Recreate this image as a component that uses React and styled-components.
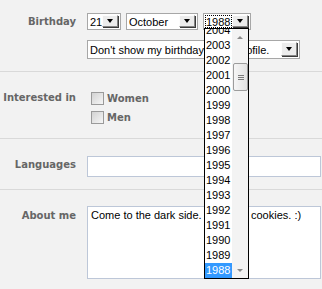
import React from 'react';
import styled, { createGlobalStyle } from 'styled-components';

const GlobalStyle = createGlobalStyle`
  html, body {
    margin: 0;
    padding: 0;
    background: #f2f2f2;
  }
  body {
    font-family: "Liberation Sans", Arial, sans-serif;
    font-size: 11px;
    color: #000;
  }
`;

const Page = styled.div`
  width: 322px;
  height: 289px;
  overflow: hidden;
  position: relative;
`;

const Section = styled.div`
  display: grid;
  grid-template-columns: 76px 1fr;
  column-gap: 11px;
  padding: ${p => p.$pad};
  border-bottom: ${p => (p.$last ? 'none' : '1px solid #d9d9d9')};
`;

const Label = styled.div`
  font-family: "DejaVu Sans", Verdana, sans-serif;
  font-weight: bold;
  font-size: 10px;
  line-height: 12px;
  color: #666;
  text-align: right;
  white-space: nowrap;
  padding-top: ${p => p.$top || 0}px;
`;

const Controls = styled.div`
  display: flex;
  flex-direction: column;
  align-items: flex-start;
  gap: ${p => p.$gap || 0}px;
`;

const SelectRow = styled.div`
  display: flex;
  gap: 5px;
`;

const SelectBox = styled.div`
  position: relative;
  box-sizing: border-box;
  width: ${p => p.$w}px;
  height: ${p => p.$h || 17}px;
  border: 1px solid #a7a7a7;
  background: #fff;
  padding: 1px;
  display: flex;
  align-items: stretch;
`;

const SelectValue = styled.div`
  flex: 1;
  display: flex;
  align-items: center;
  padding-left: 1px;
  white-space: nowrap;
  overflow: hidden;
  outline: ${p => (p.$focused ? '1px dotted #000' : 'none')};
  outline-offset: -1px;
`;

const ArrowButton = styled.div`
  box-sizing: border-box;
  width: 16px;
  background: #ececec;
  border: 1px solid;
  border-color: #fdfdfd #858585 #858585 #fdfdfd;
  box-shadow: 1px 1px 0 #3a3a3a;
  margin-right: 1px;
  margin-bottom: 1px;
  display: flex;
  align-items: center;
  justify-content: center;

  &::after {
    content: '';
    width: 0;
    height: 0;
    border-left: 3.5px solid transparent;
    border-right: 3.5px solid transparent;
    border-top: 4px solid #000;
  }
`;

const DropList = styled.div`
  position: absolute;
  left: 0;
  top: 14px;
  width: 45px;
  height: 251px;
  box-sizing: border-box;
  border: 1px solid #000;
  background: #fff;
  display: flex;
  overflow: hidden;
  z-index: 5;
`;

const Items = styled.div`
  flex: 1;
  margin-top: -6px;
  display: flex;
  flex-direction: column;
`;

const Item = styled.div`
  height: 15px;
  line-height: 15px;
  padding-left: 1px;
  background: ${p => (p.$selected ? '#3399ff' : 'transparent')};
  color: ${p => (p.$selected ? '#fff' : '#000')};
`;

const ScrollBar = styled.div`
  position: relative;
  width: 16px;
  background: #f3f3f3;
  display: flex;
  flex-direction: column;
  justify-content: space-between;
`;

const ScrollArrow = styled.div`
  height: 16px;
  display: flex;
  align-items: center;
  justify-content: center;

  &::after {
    content: '';
    width: 0;
    height: 0;
    border-left: 3px solid transparent;
    border-right: 3px solid transparent;
    ${p => (p.$down ? 'border-top: 3px solid #8a8a8a;' : 'border-bottom: 3px solid #8a8a8a;')}
  }
`;

const Thumb = styled.div`
  position: absolute;
  left: 1px;
  top: 34px;
  width: 15px;
  height: 28px;
  box-sizing: border-box;
  border: 1px solid #9c9c9c;
  border-radius: 2px;
  background: linear-gradient(to right, #f6f6f6, #e2e2e2);
  display: flex;
  flex-direction: column;
  align-items: center;
  justify-content: center;
  gap: 1px;
`;

const Grip = styled.div`
  width: 6px;
  height: 1px;
  background: #7a7a7a;
`;

const CheckRow = styled.label`
  display: flex;
  align-items: center;
  gap: 3px;
  margin-left: 4px;
  height: 13px;
`;

const CheckBox = styled.span`
  box-sizing: border-box;
  width: 13px;
  height: 13px;
  border: 1px solid #9a9a9a;
  background: linear-gradient(135deg, #d2d2d2, #f6f6f6);
`;

const CheckText = styled.span`
  font-family: "DejaVu Sans", Verdana, sans-serif;
  font-weight: bold;
  font-size: 10px;
  color: #666;
`;

const TextInput = styled.input`
  box-sizing: border-box;
  width: 234px;
  height: 21px;
  margin: 0;
  border: 1px solid #bdc7d8;
  background: #fff;
  font-family: "Liberation Sans", Arial, sans-serif;
  font-size: 11px;
  padding: 2px 3px;
  outline: none;
`;

const TextArea = styled.textarea`
  box-sizing: border-box;
  display: block;
  width: 234px;
  height: 73px;
  margin: 0;
  border: 1px solid #bdc7d8;
  background: #fff;
  font-family: "Liberation Sans", Arial, sans-serif;
  font-size: 11px;
  color: #000;
  padding: 2px 3px;
  resize: none;
  overflow: hidden;
  outline: none;
`;

const Select = ({ value, width, height, focused, children }) => (
  <SelectBox $w={width} $h={height}>
    <SelectValue $focused={focused}>{value}</SelectValue>
    <ArrowButton />
    {children}
  </SelectBox>
);

const years = [];
for (let y = 2004; y >= 1988; y--) years.push(y);

export default function App() {
  return (
    <Page>
      <GlobalStyle />
      <Section $pad="13px 0 12px">
        <Label $top={3}>Birthday</Label>
        <Controls $gap={10}>
          <SelectRow>
            <Select value="21" width={34} />
            <Select value="October" width={72} />
            <Select value="1988" width={48} focused>
              <DropList>
                <Items>
                  {years.map(y => (
                    <Item key={y} $selected={y === 1988}>{y}</Item>
                  ))}
                </Items>
                <ScrollBar>
                  <ScrollArrow />
                  <Thumb>
                    <Grip />
                    <Grip />
                    <Grip />
                  </Thumb>
                  <ScrollArrow $down />
                </ScrollBar>
              </DropList>
            </Select>
          </SelectRow>
          <Select value="Don't show my birthday in my profile." width={213} height={19} />
        </Controls>
      </Section>

      <Section $pad="20px 0 14px">
        <Label $top={0}>Interested in</Label>
        <Controls $gap={6}>
          <CheckRow>
            <CheckBox />
            <CheckText>Women</CheckText>
          </CheckRow>
          <CheckRow>
            <CheckBox />
            <CheckText>Men</CheckText>
          </CheckRow>
        </Controls>
      </Section>

      <Section $pad="17px 0 12px">
        <Label $top={3}>Languages</Label>
        <Controls>
          <TextInput type="text" defaultValue="" />
        </Controls>
      </Section>

      <Section $pad="16px 0 10px" $last>
        <Label $top={4}>About me</Label>
        <Controls>
          <TextArea defaultValue="Come to the dark side. We have cookies. :)" />
        </Controls>
      </Section>
    </Page>
  );
}
